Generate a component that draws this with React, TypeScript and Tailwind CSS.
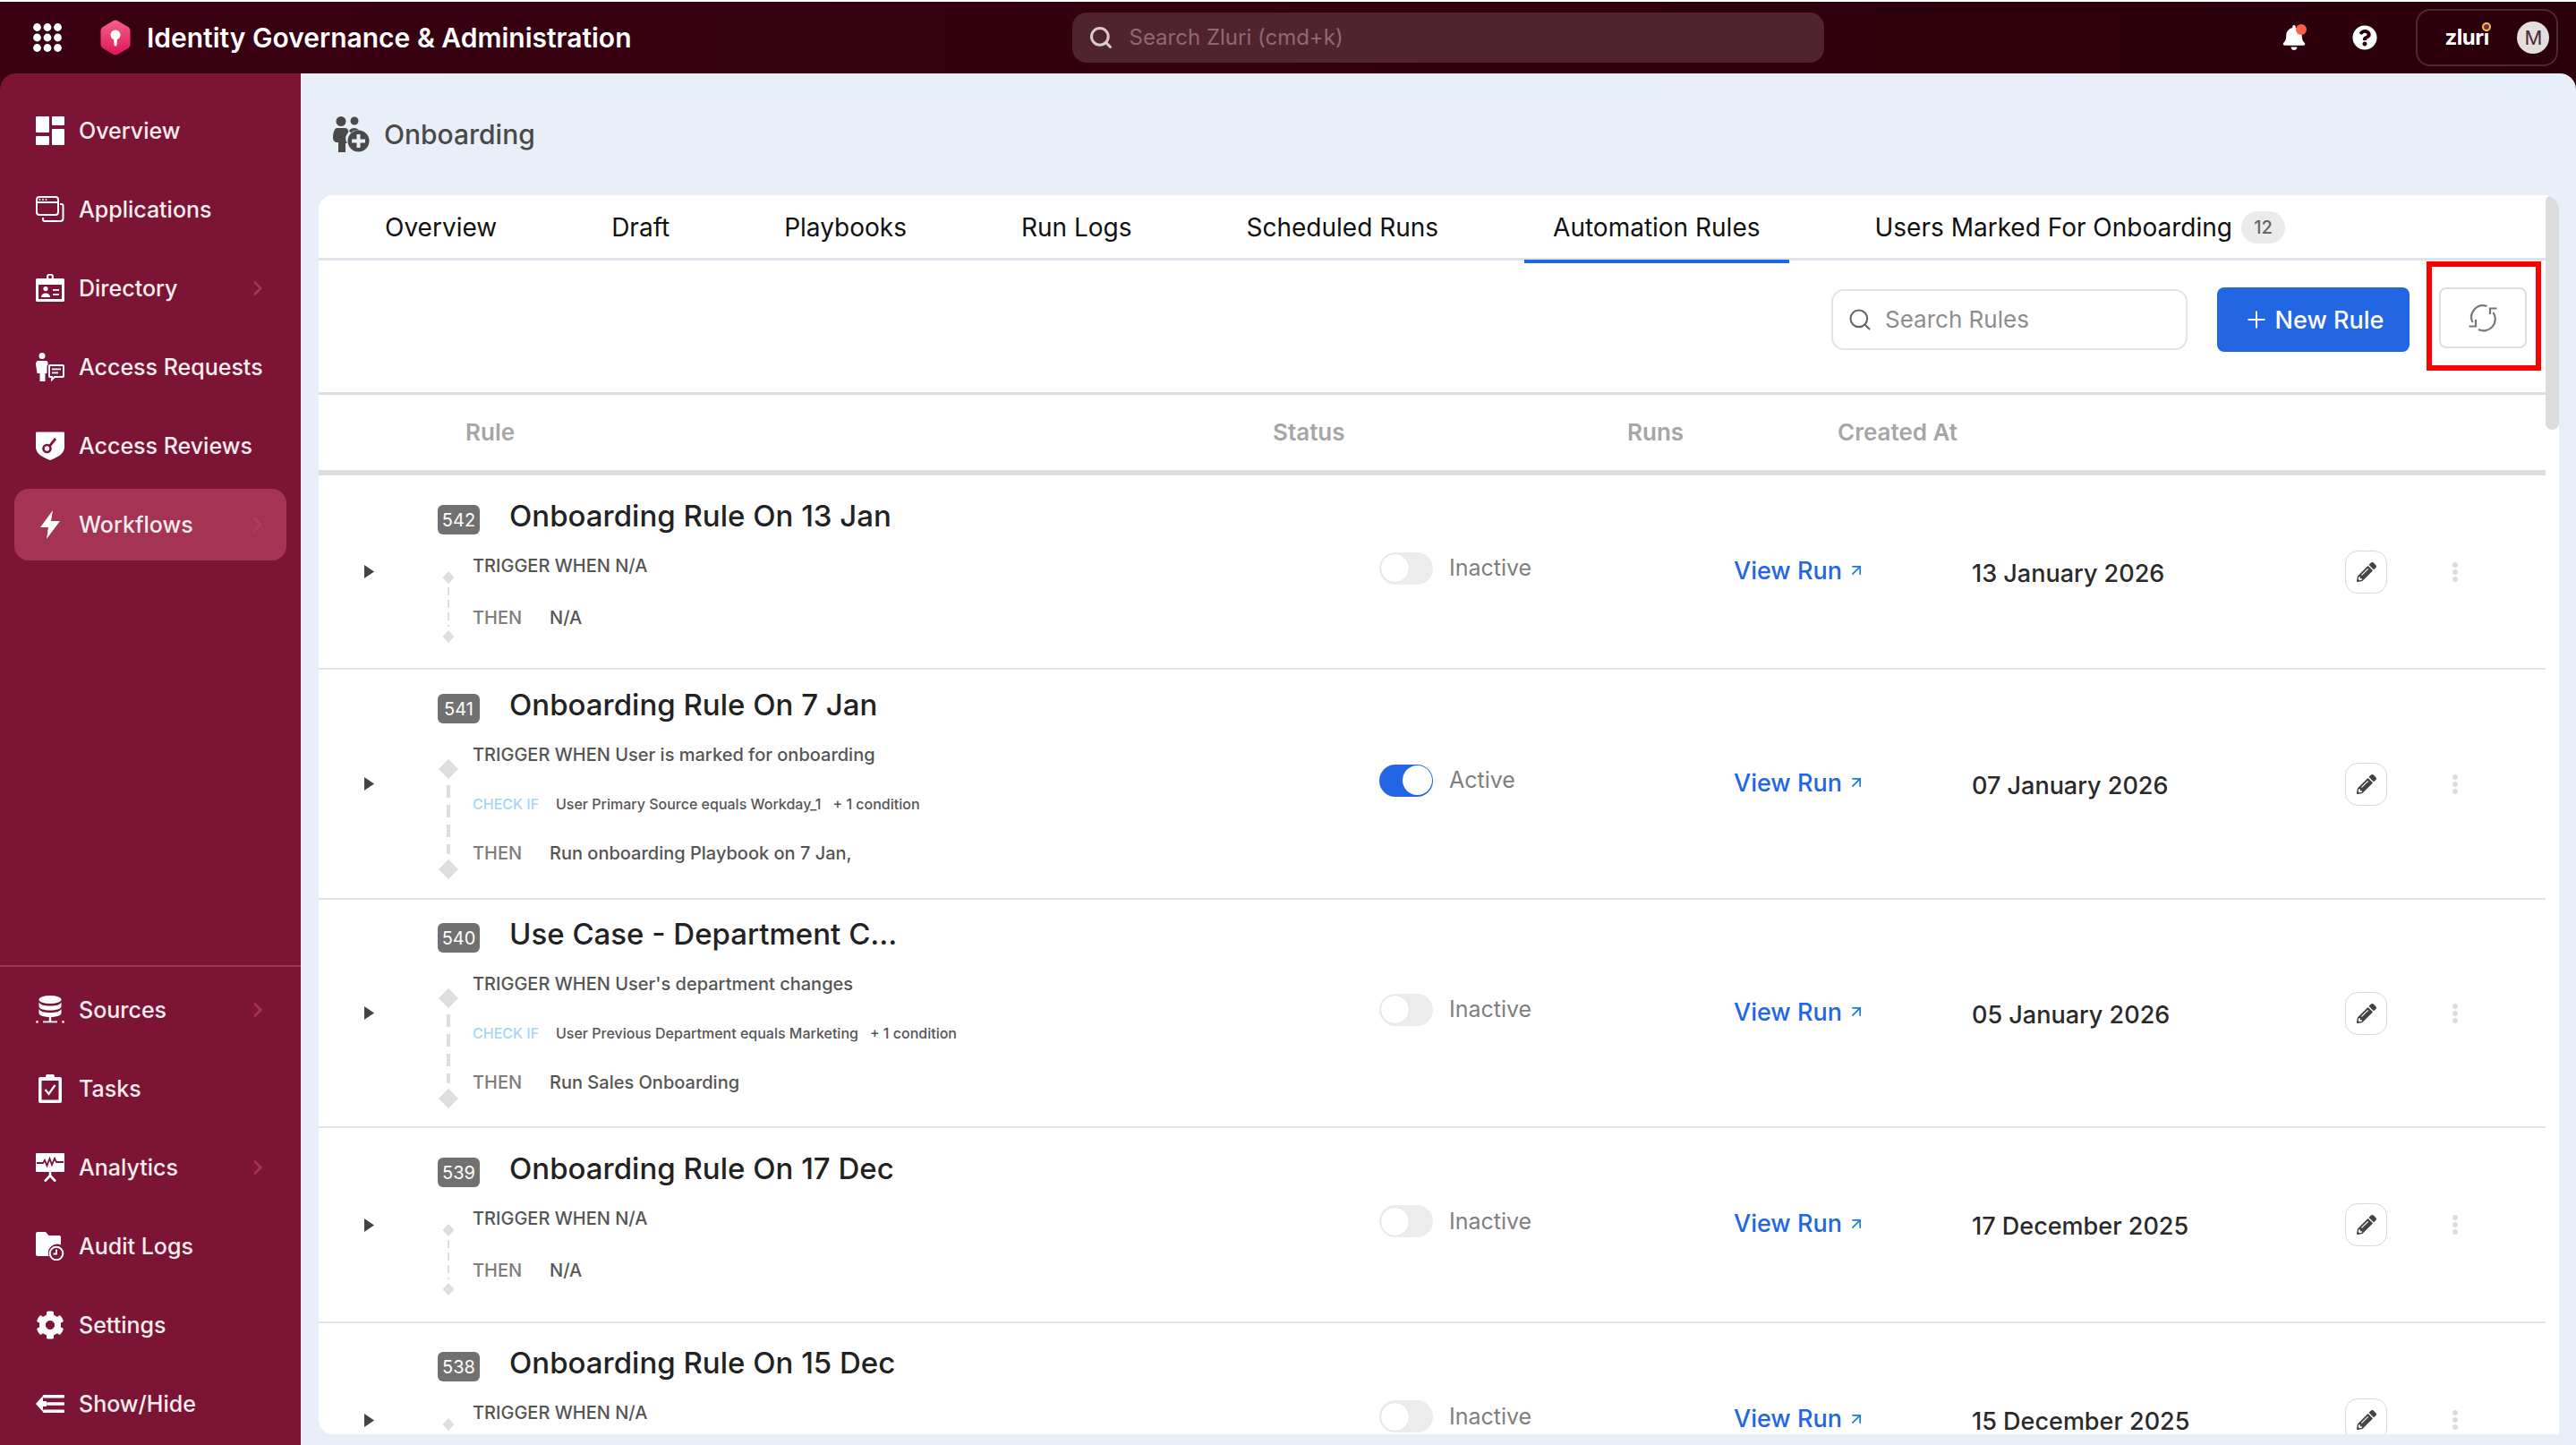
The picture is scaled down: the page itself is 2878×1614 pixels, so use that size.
import React from "react";
import { Search, ChevronRight, ArrowUpRight, Plus } from "lucide-react";
import { FaBell, FaQuestionCircle, FaCog, FaPencilAlt } from "react-icons/fa";

const B = "#7c1535";

const Ic = ({ children }: { children: React.ReactNode }) => (
  <svg width="32" height="32" viewBox="0 0 32 32" fill="white" className="shrink-0">{children}</svg>
);

const icons: Record<string, React.ReactNode> = {
  Overview: (
    <Ic>
      <rect x="0" y="0" width="15" height="18" rx="1" />
      <rect x="0" y="22" width="15" height="10" rx="1" />
      <rect x="18" y="0" width="14" height="10" rx="1" />
      <rect x="18" y="14" width="14" height="18" rx="1" />
    </Ic>
  ),
  Applications: (
    <Ic>
      <rect x="1" y="2" width="24" height="20" rx="3" fill="none" stroke="white" strokeWidth="2" />
      <rect x="1" y="7" width="24" height="2" />
      <circle cx="4.5" cy="5" r="1" /><circle cx="8" cy="5" r="1" /><circle cx="11.5" cy="5" r="1" />
      <path d="M27 10h1.5a2 2 0 0 1 2 2v14a3 3 0 0 1-3 3H10a2 2 0 0 1-2-2v-2" fill="none" stroke="white" strokeWidth="2" />
    </Ic>
  ),
  Directory: (
    <Ic>
      <circle cx="16" cy="3.5" r="3" fill="none" stroke="white" strokeWidth="2" />
      <rect x="0" y="5" width="32" height="26" rx="1.5" />
      <rect x="3" y="12" width="26" height="16" fill={B} />
      <circle cx="11" cy="16.5" r="2.6" />
      <path d="M6 26c0-3 2-4.500 5-4.500s5 1.500 5 4.500z" />
      <rect x="19" y="17" width="7" height="1.800" /><rect x="19" y="22" width="7" height="1.800" />
    </Ic>
  ),
  "Access Requests": (
    <Ic>
      <circle cx="7" cy="3.500" r="3.500" />
      <path d="M2.500 9h9a2 2 0 0 1 2 2v2.500a3 3 0 0 0-1 2V23h-2v9H4.500v-9H1.500L0 13c0-2.500 1-4 2.500-4z" />
      <path d="M16 14h14a1 1 0 0 1 1 1v11a1 1 0 0 1-1 1h-9l-3 3v-3h-2a1 1 0 0 1-1-1V15a1 1 0 0 1 1-1z" fill="none" stroke="white" strokeWidth="2" />
      <rect x="18" y="17.500" width="10" height="1.800" /><rect x="18" y="21.500" width="7" height="1.800" />
    </Ic>
  ),
  "Access Reviews": (
    <Ic>
      <path d="M1 0.500h30a1 1 0 0 1 1 1V17c0 8-8 12-16 15C8 29 0 25 0 17V1.500a1 1 0 0 1 1-1z" />
      <circle cx="12.500" cy="19" r="4" fill="none" stroke={B} strokeWidth="2.600" />
      <path d="M15.500 16L22 8" stroke={B} strokeWidth="2.800" fill="none" />
    </Ic>
  ),
  Workflows: (
    <Ic>
      <path d="M19 0L5 19h9l-2 13 15-20H17z" />
    </Ic>
  ),
  Sources: (
    <Ic>
      <ellipse cx="16" cy="4.500" rx="12.500" ry="4.500" />
      <path d="M3.500 7.500c2 3 5 4 12.500 4s10.500-1 12.500-4V12c0 3-6 4.500-12.500 4.500S3.500 15 3.500 12z" />
      <path d="M3.500 15c2 3 5 4 12.500 4s10.500-1 12.500-4v4.500c0 3-6 4.500-12.500 4.500S3.500 22.500 3.500 19.500z" />
      <rect x="14.800" y="24" width="2.400" height="5" />
      <rect x="8" y="28.500" width="16" height="1.800" />
      <circle cx="1.500" cy="29.400" r="1.300" /><circle cx="30.500" cy="29.400" r="1.300" />
    </Ic>
  ),
  Tasks: (
    <Ic>
      <path d="M5 3h6a5 5 0 0 1 10 0h6a2 2 0 0 1 2 2v25a2 2 0 0 1-2 2H5a2 2 0 0 1-2-2V5a2 2 0 0 1 2-2z" />
      <rect x="6.500" y="7" width="19" height="21.500" fill={B} />
      <path d="M10.500 17l4 5 7-10" fill="none" stroke="white" strokeWidth="2.200" />
    </Ic>
  ),
  Analytics: (
    <Ic>
      <rect x="0" y="0" width="32" height="21" rx="1" />
      <path d="M1 11h7l2-3 2.500 6 3-8 2.500 7 3-7 2 4h8" fill="none" stroke={B} strokeWidth="1.800" />
      <path d="M16 21v4M16 25l-6 6.500M16 25l6 6.500" fill="none" stroke="white" strokeWidth="2.600" />
    </Ic>
  ),
  "Audit Logs": (
    <Ic>
      <path d="M2 0h9l3.500 4H26a2 2 0 0 1 2 2v8.500A10 10 0 0 0 14.500 27H2a2 2 0 0 1-2-2V2a2 2 0 0 1 2-2z" />
      <circle cx="23" cy="24" r="7.300" fill="none" stroke="white" strokeWidth="2" />
      <path d="M23 19.500V24.500h-3.500" fill="none" stroke="white" strokeWidth="1.800" />
    </Ic>
  ),
  Settings: <FaCog size={32} color="white" className="shrink-0" />,
  "Show/Hide": (
    <Ic>
      <path d="M0 16l8-9v6h4v6H8v6z" />
      <rect x="8" y="6" width="24" height="3.500" rx="1" />
      <rect x="12" y="14.200" width="20" height="3.500" rx="1" />
      <rect x="8" y="22.500" width="24" height="3.500" rx="1" />
    </Ic>
  ),
};

const NavItem = ({ label, arrow, active }: { label: string; arrow?: boolean; active?: boolean }) => (
  <div className={`flex h-[80px] w-[304px] items-center rounded-[16px] pl-[24px] pr-[19px] ${active ? "bg-[#a53354]" : ""}`}>
    {icons[label]}
    <span className="ml-[16px] flex-1 text-[25px] font-medium leading-none tracking-[0px] text-[#f7ecef]">{label}</span>
    {arrow && <ChevronRight size={26} strokeWidth={2.4} className={active ? "text-[#b03c60]" : "text-[#a83358]"} />}
  </div>
);

const Timeline = ({ big }: { big: boolean }) =>
  big ? (
    <svg width="24" height="134" viewBox="0 0 24 134" className="mt-[19px] shrink-0">
      <polygon points="12,0 23,11 12,22 1,11" fill="#dedede" />
      <line x1="12" y1="29" x2="12" y2="106" stroke="#dedede" strokeWidth="4" strokeDasharray="14 8" />
      <polygon points="12,112 23,123 12,134 1,123" fill="#dedede" />
    </svg>
  ) : (
    <svg width="24" height="80" viewBox="0 0 24 80" className="mt-[20px] shrink-0">
      <polygon points="12,0 18.500,7 12,14 5.500,7" fill="#dedede" />
      <line x1="12" y1="18" x2="12" y2="62" stroke="#dedede" strokeWidth="2" strokeDasharray="9 5" />
      <polygon points="12,66 18.500,73 12,80 5.500,73" fill="#dedede" />
    </svg>
  );

type R = {
  id: string; title: string; trigger: string; check?: string; then: string; active: boolean; date: string; cls: string;
};

const rows: R[] = [
  { id: "542", title: "Onboarding Rule On 13 Jan", trigger: "N/A", then: "N/A", active: false, date: "13 January 2026", cls: "h-[217px] pt-[33px]" },
  { id: "541", title: "Onboarding Rule On 7 Jan", trigger: "User is marked for onboarding", check: "User Primary Source equals Workday_1", then: "Run onboarding Playbook on 7 Jan,", active: true, date: "07 January 2026", cls: "h-[257px] pt-[27px]" },
  { id: "540", title: "Use Case - Department C...", trigger: "User's department changes", check: "User Previous Department equals Marketing", then: "Run Sales Onboarding", active: false, date: "05 January 2026", cls: "h-[255px] pt-[26px]" },
  { id: "539", title: "Onboarding Rule On 17 Dec", trigger: "N/A", then: "N/A", active: false, date: "17 December 2025", cls: "h-[218px] pt-[33px]" },
  { id: "538", title: "Onboarding Rule On 15 Dec", trigger: "N/A", then: "N/A", active: false, date: "15 December 2025", cls: "h-[218px] pt-[32px]" },
];

const Row = ({ r }: { r: R }) => {
  const big = !!r.check;
  const [h, pt] = r.cls.split(" ");
  return (
    <div className={`flex shrink-0 items-center border-b-2 border-[#dfe4ea] ${h}`}>
      <div className="w-[133px] shrink-0 pl-[51px]">
        <svg width="11" height="15" viewBox="0 0 11 15"><polygon points="0,0 11,7.500 0,15" fill="#444" /></svg>
      </div>
      <div className={`h-full w-[1052px] shrink-0 self-start ${pt}`}>
        <div className="flex h-[33px] items-center">
          <span className="flex h-[33px] w-[47px] items-center justify-center rounded-[6px] bg-[#717171] text-[20px] leading-none text-white">{r.id}</span>
          <span className="mb-[8px] ml-[33px] text-[33px] font-medium leading-[33px] text-[#222222]">{r.title}</span>
        </div>
        <div className="mt-[21px] flex">
          <Timeline big={big} />
          <div className={`ml-[15px] flex flex-col ${big ? "gap-[27px]" : "gap-[30px]"}`}>
            <div className="flex h-[28px] items-center text-[20px] font-medium leading-none text-[#555555]">TRIGGER WHEN&nbsp;{r.trigger}</div>
            {r.check && (
              <div className="flex h-[28px] items-center text-[16px] font-medium leading-none">
                <span className="w-[93px] text-[#a3d6f8]">CHECK IF</span>
                <span className="text-[#555555]">{r.check}</span>
                <span className="ml-[13px] text-[#555555]">+ 1 condition</span>
              </div>
            )}
            <div className="flex h-[28px] items-center text-[20px] font-medium leading-none text-[#555555]">
              <span className="w-[86px] text-[#7d7d7d]">THEN</span>
              <span>{r.then}</span>
            </div>
          </div>
        </div>
      </div>
      <div className="mb-[8px] flex w-[396px] shrink-0 items-center">
        <div className={`flex h-[36px] w-[60px] items-center rounded-full ${r.active ? "justify-end bg-[#2266e3] pr-[1px]" : "justify-start bg-[#ececec] pl-[1px]"}`}>
          <div className={`h-[33px] w-[33px] rounded-full bg-white ${r.active ? "" : "border border-[#e4e4e4]"}`} />
        </div>
        <span className="ml-[18px] text-[25px] leading-none text-[#7f7f7f]">{r.active ? "Active" : "Inactive"}</span>
      </div>
      <div className="mb-[3px] flex w-[266px] shrink-0 items-center text-[27px] font-medium leading-none text-[#2266e3]">
        View Run
        <ArrowUpRight size={20} strokeWidth={2} className="ml-[6px] text-[#1f7bd9]" />
      </div>
      <div className="mt-[3px] w-[417px] shrink-0 text-[27px] font-medium leading-none text-[#2a2a2a]">{r.date}</div>
      <div className="flex h-[48px] w-[47px] shrink-0 items-center justify-center rounded-[14px] border border-[#d8d8d8]">
        <FaPencilAlt size={22} color="#444" />
      </div>
      <div className="ml-[73px] flex flex-col gap-[2px]">
        <span className="h-[6px] w-[6px] rounded-full bg-[#dcdcdc]" />
        <span className="h-[6px] w-[6px] rounded-full bg-[#dcdcdc]" />
        <span className="h-[6px] w-[6px] rounded-full bg-[#dcdcdc]" />
      </div>
    </div>
  );
};

const Tab = ({ label, active, badge }: { label: string; active?: boolean; badge?: string }) => (
  <div className={`-mb-[4px] flex h-[76px] items-center border-b-4 px-[32px] text-[28px] leading-none text-[#111111] ${active ? "border-[#2266e3]" : "border-transparent"}`}>
    {label}
    {badge && (
      <span className="ml-[10px] flex h-[36px] w-[49px] items-center justify-center rounded-full bg-[#ebebeb] text-[20px] font-medium text-[#666666]">{badge}</span>
    )}
  </div>
);

export default function App() {
  return (
    <div className="h-[1614px] w-[2878px] overflow-hidden bg-white pt-[2px] font-['Inter',sans-serif]">
      <div className="flex h-[1612px] flex-col bg-gradient-to-r from-[#3a0012] to-[#2a000b]">
        <header className="flex h-[80px] shrink-0 items-center">
          <svg width="32" height="32" viewBox="0 0 32 32" fill="white" className="ml-[37px] shrink-0">
            {[4.5, 16, 27.5].map((y) => [4.5, 16, 27.5].map((x) => <circle key={`${x}-${y}`} cx={x} cy={y} r="4.4" />))}
          </svg>
          <svg width="36" height="40" viewBox="0 0 36 40" className="ml-[42px] shrink-0">
            <defs>
              <linearGradient id="lg" x1="0" y1="0" x2="0" y2="1">
                <stop offset="0" stopColor="#f75f8c" />
                <stop offset="1" stopColor="#df1559" />
              </linearGradient>
            </defs>
            <path d="M15.500 1.200a5 5 0 0 1 5 0l11.500 6.800a5 5 0 0 1 2.500 4.300v15.400a5 5 0 0 1-2.500 4.300l-11.500 6.800a5 5 0 0 1-5 0L4 31.900a5 5 0 0 1-2.500-4.300V12.300A5 5 0 0 1 4 8z" fill="url(#lg)" />
            <circle cx="18" cy="17" r="5.500" fill="white" />
            <path d="M16 19h4l-.5 9a1.500 1.500 0 0 1-3 0z" fill="white" />
          </svg>
          <span className="ml-[17px] text-[30px] font-semibold leading-none text-white">Identity Governance &amp; Administration</span>
          <div className="ml-[493px] flex h-[56px] w-[840px] items-center rounded-[16px] bg-[#50242f] pl-[18px]">
            <Search size={28} strokeWidth={2.6} className="text-[#d8cace]" />
            <span className="ml-[17px] text-[24px] leading-none text-[#8d6a73]">Search Zluri (cmd+k)</span>
          </div>
          <div className="relative ml-[511px] h-[28px] w-[29px]">
            <FaBell size={28} color="white" />
            <span className="absolute -top-[1px] left-[16px] h-[12px] w-[12px] rounded-full bg-[#fb5f4e]" />
          </div>
          <FaQuestionCircle size={28} color="white" className="ml-[50px] shrink-0" />
          <div className="ml-[43px] flex h-[64px] w-[159px] items-center rounded-[16px] border-2 border-[#4a2a34] pl-[30px]">
            <span className="relative text-[24px] font-bold leading-none tracking-[-0.5px] text-white">
              zluri
              <span className="absolute -right-[2px] -top-[5px] h-[10px] w-[10px] rounded-full border-2 border-[#f5c542] bg-[#7a2a50]" />
            </span>
            <span className="ml-auto mr-[8px] flex h-[36px] w-[36px] items-center justify-center rounded-full bg-[#e4dedf] text-[22px] leading-none text-[#4a2a34]">M</span>
          </div>
        </header>
        <div className="flex min-h-0 flex-1">
          <aside className="flex w-[336px] shrink-0 flex-col rounded-tl-[18px] bg-[#7c1535]">
            <nav className="flex flex-col gap-[8px] pl-[16px] pt-[24px]">
              <NavItem label="Overview" />
              <NavItem label="Applications" />
              <NavItem label="Directory" arrow />
              <NavItem label="Access Requests" />
              <NavItem label="Access Reviews" />
              <NavItem label="Workflows" arrow active />
            </nav>
            <nav className="mt-auto flex flex-col gap-[8px] border-t-2 border-[#a0304f] pb-[6px] pl-[16px] pt-[8px]">
              <NavItem label="Sources" arrow />
              <NavItem label="Tasks" />
              <NavItem label="Analytics" arrow />
              <NavItem label="Audit Logs" />
              <NavItem label="Settings" />
              <NavItem label="Show/Hide" />
            </nav>
          </aside>
          <main className="flex min-w-0 flex-1 flex-col rounded-tr-[18px] bg-[#e8eff9]">
            <div className="flex h-[136px] shrink-0 items-center pl-[36px]">
              <svg width="41" height="40" viewBox="0 0 41 40" fill="#4a4a4a" className="shrink-0">
                <circle cx="9" cy="5.500" r="5.500" />
                <circle cx="24" cy="5" r="4.500" />
                <path d="M4.500 13h9c2 0 3.500 1.500 4 4l-3 5c-.7 2-.5 6 1.500 8h-2v10H6V29H3c-2-1-3-3-3-5 0-5 1.500-11 4.500-11z" />
                <path d="M18 16c2-4 9-4 11-.5-4 0-7 .500-9 3z" />
                <circle cx="28.500" cy="27.500" r="12" />
                <rect x="26.500" y="20" width="4" height="15" fill="#e8eff9" />
                <rect x="21" y="25.500" width="15" height="4" fill="#e8eff9" />
              </svg>
              <span className="ml-[16px] text-[30px] font-medium leading-none text-[#4a4a4a]">Onboarding</span>
            </div>
            <div className="ml-[20px] mr-[19px] mb-[12px] flex min-h-0 flex-1 overflow-hidden rounded-t-[16px] rounded-bl-[16px] bg-white">
              <div className="flex min-w-0 flex-1 flex-col">
                <div className="flex h-[73px] shrink-0 gap-[64px] border-b-[3px] border-[#dfe4ea] pl-[42px]">
                  <Tab label="Overview" />
                  <Tab label="Draft" />
                  <Tab label="Playbooks" />
                  <Tab label="Run Logs" />
                  <Tab label="Scheduled Runs" />
                  <Tab label="Automation Rules" active />
                  <Tab label="Users Marked For Onboarding" badge="12" />
                </div>
                <div className="relative flex h-[150px] shrink-0 justify-end gap-[33px] border-b-[3px] border-[#dcdde0] pr-[21px] pt-[30px]">
                  <div className="mt-[2px] flex h-[68px] w-[398px] items-center rounded-[14px] border-2 border-[#e4e4e4] pl-[16px]">
                    <Search size={28} strokeWidth={1.8} className="text-[#666666]" />
                    <span className="ml-[14px] text-[26px] leading-none text-[#8d8d8d]">Search Rules</span>
                  </div>
                  <div className="flex h-[72px] w-[215px] items-center justify-center rounded-[8px] bg-[#2266e3] text-[27px] font-medium leading-none text-white">
                    <Plus size={30} strokeWidth={1.6} className="mr-[6px]" />
                    New Rule
                  </div>
                  <div className="flex h-[68px] w-[98px] items-center justify-center rounded-[8px] border-2 border-[#dedede]">
                    <svg width="32" height="32" viewBox="0 0 32 32" fill="none" stroke="#777" strokeWidth="2.200">
                      <path d="M4.500 21A13 13 0 0 1 20.500 3" />
                      <path d="M27.500 10A13 13 0 0 1 11 29" />
                      <path d="M0.500 25.500H8V18" />
                      <path d="M31.500 5.500H24V12" />
                    </svg>
                  </div>
                  <div className="absolute left-[2355px] top-[1px] h-[122px] w-[128px] border-[6px] border-[#ff0000]" />
                </div>
                <div className="flex h-[90px] shrink-0 items-center border-b-[6px] border-[#dcdde0] text-[26px] font-semibold leading-none text-[#a6a6a6]">
                  <span className="w-[1066px] shrink-0 pl-[164px]">Rule</span>
                  <span className="w-[396px] shrink-0">Status</span>
                  <span className="w-[235px] shrink-0">Runs</span>
                  <span>Created At</span>
                </div>
                <div className="flex min-h-0 flex-1 flex-col overflow-hidden">
                  {rows.map((r) => <Row key={r.id} r={r} />)}
                </div>
              </div>
              <div className="w-[15px] shrink-0 bg-white">
                <div className="h-[262px] rounded-full bg-[#dcdcdc]" />
              </div>
            </div>
          </main>
        </div>
      </div>
    </div>
  );
}
